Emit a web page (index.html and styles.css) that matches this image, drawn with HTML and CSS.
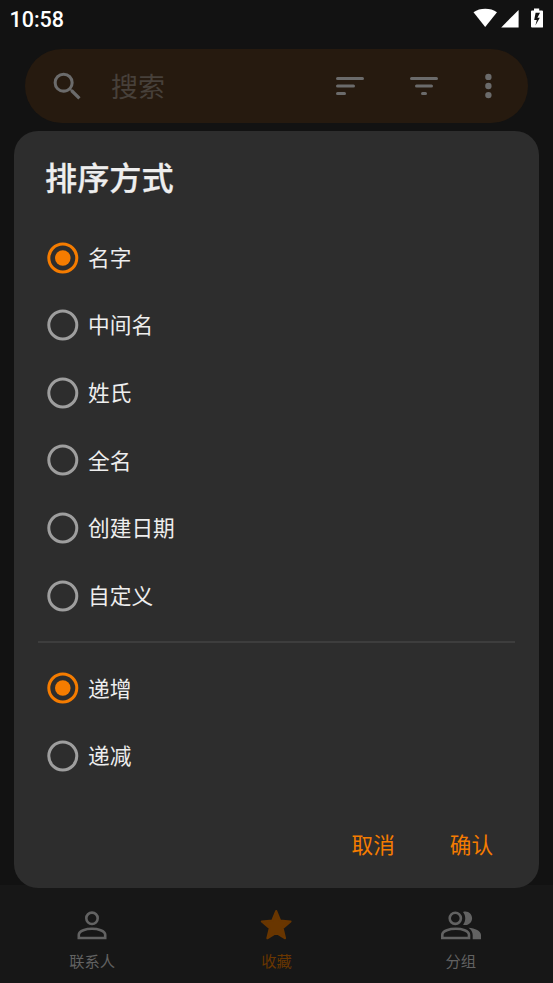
FILE: index.html
```html
<!DOCTYPE html>
<html lang="zh-CN">
<head>
<meta charset="utf-8">
<title>排序方式</title>
<link rel="stylesheet" href="styles.css">
</head>
<body>
<svg width="0" height="0" class="defs">
  <symbol id="radio-off" viewBox="0 0 32 32"><circle cx="15.800" cy="16" r="14" fill="none" stroke="#9e9e9e" stroke-width="3"/></symbol>
  <symbol id="radio-on" viewBox="0 0 32 32"><circle cx="15.800" cy="16" r="14" fill="none" stroke="#f57c00" stroke-width="3"/><circle cx="15.800" cy="16" r="7.800" fill="#f57c00"/></symbol>
</svg>
<div class="screen">
  <header class="status">
    <span class="clock">10:58</span>
    <svg class="status-icons" width="72" height="24" viewBox="0 0 72 24" fill="#fff">
      <path d="M.5 6.200C7 1.600 17.500 1.600 24 6.200L12.200 21z"/>
      <path d="M28.200 21.500 45.600 3.900V21.500z"/>
      <path fill-rule="evenodd" d="M61 2.400h5.200v2H69q1 0 1 1v15.500q0 .7-.8.7H59q-1 0-1-1V5.400q0-1 1-1h2zM62.600 6.800 61.200 14h2.600l-1.400 5.600L66.800 11.800H64.400L67 6.800z"/>
    </svg>
  </header>
  <div class="search">
    <svg class="search-icon" width="37" height="37" viewBox="0 0 24 24"><path d="M15.500 14h-.79l-.28-.27A6.471 6.471 0 0 0 16 9.500 6.500 6.500 0 1 0 9.500 16c1.610 0 3.090-.59 4.230-1.570l.27.28v.79l5 4.990L20.490 19l-4.990-5zm-6 0C7.010 14 5 11.990 5 9.500S7.010 5 9.500 5 14 7.010 14 9.500 11.990 14 9.500 14z"/></svg>
    <span class="placeholder">搜索</span>
    <svg class="sort-icon" width="28" height="20" viewBox="0 0 28 20"><rect y="1" width="28" height="3" rx="1.500"/><rect y="8.500" width="19" height="3" rx="1.500"/><rect y="16" width="10" height="3" rx="1.500"/></svg>
    <svg class="filter-icon" width="28" height="20" viewBox="0 0 28 20"><rect y="1" width="28" height="3" rx="1.500"/><rect x="5" y="8.500" width="18" height="3" rx="1.500"/><rect x="11" y="16" width="6" height="3" rx="1.500"/></svg>
    <svg class="more-icon" width="8" height="26" viewBox="0 0 8 26"><circle cx="4.400" cy="3.900" r="3.200"/><circle cx="4.400" cy="13" r="3.200"/><circle cx="4.400" cy="22.100" r="3.200"/></svg>
  </div>
  <nav class="nav">
    <div class="tab">
      <svg width="40" height="32" viewBox="0 0 40 32" fill="none" stroke="currentColor" stroke-width="2.600"><circle cx="20" cy="9.300" r="5.700"/><path d="M6.800 29v-3.200C6.800 21.500 14.500 19.800 20 19.800s13.200 1.700 13.200 6V29z"/></svg>
      <span>联系人</span>
    </div>
    <div class="tab active">
      <svg width="40" height="32" viewBox="0 0 40 32" fill="currentColor" stroke="currentColor" stroke-width="2" stroke-linejoin="round"><path d="M20.200 2 24.200 11.600 34.600 12.500 26.700 19.300 29.100 29.300 20.200 24 11.300 29.300 13.700 19.300 5.800 12.500 16.200 11.600z"/></svg>
      <span>收藏</span>
    </div>
    <div class="tab">
      <svg width="40" height="32" viewBox="0 0 40 32" fill="none" stroke="currentColor" stroke-width="2.600"><circle cx="14.300" cy="9.300" r="5.600"/><path d="M1.300 29v-3.200C1.300 21.500 9 19.800 14.800 19.800s13.200 1.700 13.200 6V29z"/><path fill="currentColor" stroke="none" d="M22 2.900C27 1.200 31.100 5 31.100 9.300S27 17.400 22 15.700C25 11.800 25 6.800 22 2.900zM27.500 18.700C34 19.400 40 21.800 40 26v4.300h-8.300V26c0-3-1.500-5.500-4.200-7.300z"/></svg>
      <span>分组</span>
    </div>
  </nav>
  <section class="dialog">
    <h1>排序方式</h1>
    <div class="option"><svg class="radio"><use href="#radio-on"/></svg><span>名字</span></div>
    <div class="option"><svg class="radio"><use href="#radio-off"/></svg><span>中间名</span></div>
    <div class="option"><svg class="radio"><use href="#radio-off"/></svg><span>姓氏</span></div>
    <div class="option"><svg class="radio"><use href="#radio-off"/></svg><span>全名</span></div>
    <div class="option"><svg class="radio"><use href="#radio-off"/></svg><span>创建日期</span></div>
    <div class="option"><svg class="radio"><use href="#radio-off"/></svg><span>自定义</span></div>
    <div class="divider"></div>
    <div class="option"><svg class="radio"><use href="#radio-on"/></svg><span>递增</span></div>
    <div class="option"><svg class="radio"><use href="#radio-off"/></svg><span>递减</span></div>
    <div class="actions"><span>取消</span><span>确认</span></div>
  </section>
</div>
</body>
</html>
```
FILE: styles.css
```css
* { box-sizing: border-box; }
body {
  margin: 0;
  background: #121212;
  font-family: "Noto Sans CJK SC", sans-serif;
}
.defs { display: block; }
.screen {
  position: relative;
  display: flex;
  flex-direction: column;
  height: 983px;
  overflow: hidden;
}
.status {
  display: flex;
  justify-content: space-between;
  height: 49px;
  padding: 6px 8px 0 9.5px;
}
.clock {
  font: 500 21.5px/27px Roboto, sans-serif;
  color: #fff;
}
.search {
  display: flex;
  align-items: center;
  height: 74px;
  margin: 0 25px;
  padding-left: 24px;
  border-radius: 37px;
  background: #261a0f;
  fill: #6b6b6b;
}
.placeholder {
  width: 225px;
  margin-left: 25px;
  padding-bottom: 1px;
  font-size: 27px;
  line-height: 40px;
  color: #47403a;
}
.filter-icon,
.more-icon { margin-left: 46px; }
.nav {
  display: grid;
  grid-template-columns: repeat(3, 1fr);
  height: 98px;
  margin-top: auto;
  background: #171717;
}
.tab {
  display: flex;
  flex-direction: column;
  align-items: center;
  padding-top: 24px;
  font-size: 15.3px;
  line-height: 22px;
  color: #626262;
}
.tab span { margin-top: 8px; }
.active { color: #693600; }
.dialog {
  position: absolute;
  left: 14px;
  top: 131px;
  width: 525px;
  height: 757px;
  padding: 22px 24px 24px;
  border-radius: 24px;
  background: #2d2d2d;
}
h1 {
  height: 70.8px;
  margin: 0;
  padding-left: 7px;
  font-size: 32.2px;
  font-weight: 500;
  line-height: 46px;
  color: #eee;
  -webkit-text-stroke: 0.25px #eee;
}
.option {
  display: flex;
  align-items: center;
  gap: 9px;
  height: 67.64px;
  padding-left: 9px;
  font-size: 21.7px;
  line-height: 32px;
  color: #eee;
}
.option span { padding-bottom: 1.5px; }
.radio {
  width: 32px;
  height: 32px;
}
.divider {
  height: 2px;
  margin: 11.5px 0;
  background: #3d3d3d;
}
.actions {
  display: flex;
  justify-content: flex-end;
  gap: 55px;
  margin-top: 38.5px;
  padding-right: 22px;
  font-size: 21.6px;
  line-height: 32px;
  color: #f57c00;
}
```
